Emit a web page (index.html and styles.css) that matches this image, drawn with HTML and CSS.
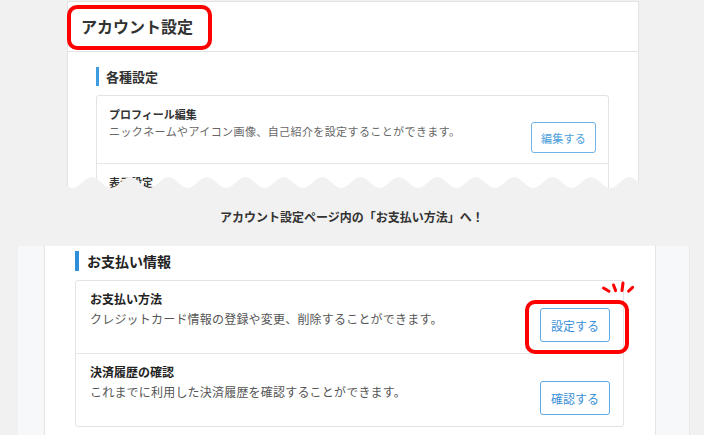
FILE: index.html
```html
<!DOCTYPE html>
<html lang="ja">
<head>
<meta charset="utf-8">
<title>アカウント設定</title>
<link rel="stylesheet" href="styles.css">
</head>
<body>
<div class="page">
  <div class="shot-top">
    <div class="panel">
      <div class="panel-head"><h1 class="page-title">アカウント設定</h1></div>
      <div class="panel-body">
        <h2 class="sec-title sec-sm">各種設定</h2>
        <div class="card">
          <div class="row row-sm">
            <div class="row-text">
              <p class="row-title">プロフィール編集</p>
              <p class="row-desc">ニックネームやアイコン画像、自己紹介を設定することができます。</p>
            </div>
            <button class="btn btn-sm">編集する</button>
          </div>
          <div class="row row-sm">
            <div class="row-text">
              <p class="row-title">表示設定</p>
            </div>
          </div>
        </div>
      </div>
    </div>
    <svg class="wave" width="572" height="12" viewBox="0 0 572 12">
      <defs>
        <pattern id="wv" x="24.7" y="0" width="38.4" height="12" patternUnits="userSpaceOnUse">
          <path d="M0 1C7 1 12.2 12 19.2 12S31.4 1 38.4 1V12H0Z" fill="#f1f1f1"/>
        </pattern>
      </defs>
      <rect x="0" y="0" width="572" height="12" fill="url(#wv)"/>
    </svg>
  </div>

  <p class="caption">アカウント設定ページ内の「お支払い方法」へ！</p>

  <div class="shot-bottom">
    <div class="content">
      <h2 class="sec-title">お支払い情報</h2>
      <div class="card">
        <div class="row">
          <div class="row-text">
            <p class="row-title">お支払い方法</p>
            <p class="row-desc">クレジットカード情報の登録や変更、削除することができます。</p>
          </div>
          <button class="btn">設定する</button>
        </div>
        <div class="row">
          <div class="row-text">
            <p class="row-title">決済履歴の確認</p>
            <p class="row-desc">これまでに利用した決済履歴を確認することができます。</p>
          </div>
          <button class="btn">確認する</button>
        </div>
      </div>
    </div>
  </div>

  <div class="mark mark-title"></div>
  <div class="mark mark-btn"></div>
  <svg class="spark" width="42" height="18" viewBox="0 0 42 18">
    <g stroke="#ff0000" stroke-width="3" stroke-linecap="round" fill="none">
      <line x1="5.5" y1="10" x2="11" y2="13.3"/>
      <line x1="15.5" y1="7" x2="17.6" y2="12.6"/>
      <line x1="25" y1="5" x2="24" y2="12.6"/>
      <line x1="34.6" y1="9.4" x2="30.6" y2="13.2"/>
    </g>
  </svg>
</div>
</body>
</html>
```

FILE: styles.css
```css
* { box-sizing: border-box; }

html, body {
  margin: 0;
  padding: 0;
  height: 435px;
  overflow: hidden;
  background: #f1f1f1;
  font-family: "Noto Sans CJK JP", "Noto Sans", sans-serif;
  color: #333;
}

.page {
  position: relative;
  width: 704px;
  height: 435px;
}

p, h1, h2 { margin: 0; }

/* ---------- top screenshot ---------- */
.shot-top {
  position: relative;
  margin-left: 67px;
  width: 572px;
  height: 188px;
  padding-top: 1px;
  overflow: hidden;
}

.panel {
  background: #fff;
  border: 1px solid #e3e3e3;
  height: 260px;
}

.panel-head {
  height: 50px;
  border-bottom: 1px solid #e3e3e3;
}

.page-title {
  font-size: 16px;
  font-weight: 700;
  line-height: 49px;
  padding-left: 13px;
  color: #333;
}

.panel-body {
  padding: 15px 29px 0 28px;
}

.sec-title {
  display: flex;
  align-items: center;
  height: 20px;
  font-size: 14px;
  font-weight: 700;
  color: #222;
  border-left: 4px solid #2e8fd8;
  padding-left: 8px;
  margin-bottom: 9px;
}

.sec-sm {
  height: 19px;
  font-size: 13px;
  border-left-width: 3px;
  border-left-color: #3d9be0;
  padding-left: 7px;
  color: #333;
}

.card {
  background: #fff;
  border: 1px solid #e3e3e3;
  border-radius: 3px;
}

.row {
  display: flex;
  align-items: flex-end;
  justify-content: space-between;
  padding: 9px 13px 11px 14px;
}

.row + .row { border-top: 1px solid #e6e6e6; }

.row-text { padding-bottom: 14px; }

.row-title {
  font-size: 12px;
  font-weight: 700;
  line-height: 18px;
  color: #222;
}

.row-desc {
  font-size: 12px;
  line-height: 18px;
  margin-top: 2px;
  color: #555;
  letter-spacing: 0.2px;
}

.btn {
  width: 70px;
  height: 34px;
  padding: 0;
  border: 1px solid #5eaae4;
  border-radius: 3px;
  background: #fff;
  color: #3a8fd6;
  font-family: inherit;
  font-size: 12px;
  letter-spacing: 0;
}

.row-sm {
  padding: 10px 12px 10px 12px;
}

.row-sm .row-title {
  font-size: 11px;
  line-height: 16px;
  color: #333;
}

.row-sm .row-desc {
  font-size: 11px;
  line-height: 16px;
  margin-top: 1px;
  color: #666;
  letter-spacing: 0.4px;
}

.row-sm .row-text { padding-bottom: 14px; }

.btn-sm {
  width: 65px;
  height: 31px;
  font-size: 11px;
  letter-spacing: 0.3px;
  border-color: #6fb3e8;
  color: #4a9ddc;
}

.wave {
  position: absolute;
  left: 0;
  bottom: 0;
  display: block;
}

/* ---------- caption ---------- */
.caption {
  height: 58px;
  line-height: 58px;
  text-align: center;
  font-size: 12px;
  font-weight: 700;
  color: #333;
}

/* ---------- bottom screenshot ---------- */
.shot-bottom {
  margin-left: 18px;
  width: 672px;
  height: 200px;
  background: #f7f8fa;
  border-right: 1px solid #e8e8e8;
}

.content {
  margin-left: 26px;
  width: 612px;
  height: 100%;
  background: #fff;
  border-left: 1px solid #e5e5e5;
  border-right: 1px solid #e5e5e5;
  padding: 5px 31px 0 30px;
}

/* ---------- annotations ---------- */
.mark {
  position: absolute;
  border: 4px solid #ff0000;
  border-radius: 10px;
}

.mark-title {
  left: 67px;
  top: 5px;
  width: 145px;
  height: 45px;
}

.mark-btn {
  left: 525px;
  top: 300px;
  width: 104px;
  height: 54px;
}

.spark {
  position: absolute;
  left: 598px;
  top: 278px;
}
```
